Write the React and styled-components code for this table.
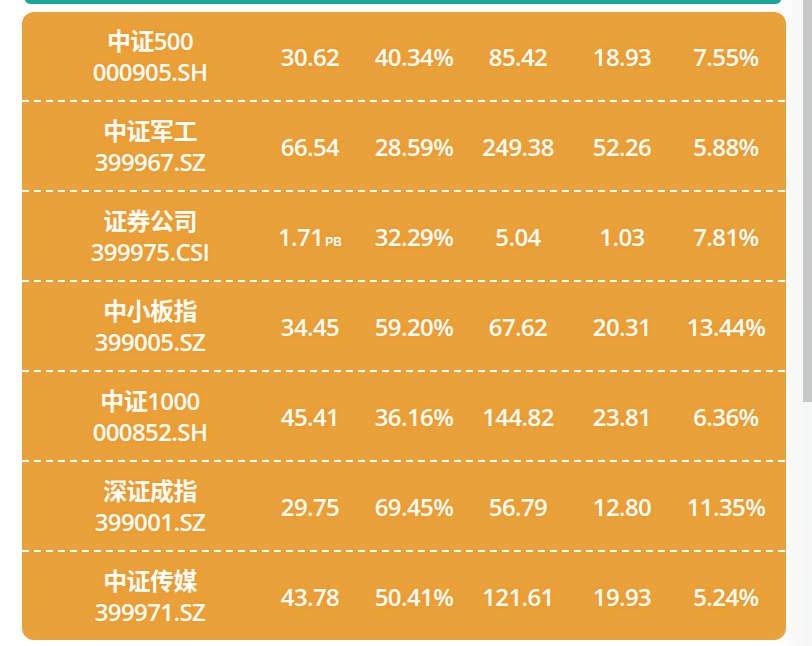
import React from 'react';
import styled, {createGlobalStyle} from 'styled-components';

const GlobalStyle = createGlobalStyle`
  html, body {
    margin: 0;
    padding: 0;
    background: #ffffff;
  }
`;

const Page = styled.div`
  display: flex;
  width: 812px;
  height: 646px;
  overflow: hidden;
`;

const Main = styled.div`
  width: 803px;
  padding-left: 22px;
  box-sizing: border-box;
  background: linear-gradient(90deg, #ffffff 0%, #ffffff 96%, #f7f7f7 100%);
`;

const TopStrip = styled.div`
  width: 756px;
  height: 4px;
  margin-left: 3px;
  background: #17a697;
  border-radius: 0 0 6px 6px / 0 0 4px 4px;
`;

const Card = styled.div`
  margin-top: 8px;
  width: 764px;
  background: #e9a23b;
  border-radius: 12px;
  overflow: hidden;
  font-family: 'Open Sans', 'Noto Sans CJK SC', sans-serif;
  color: #ffffff;
`;

const Row = styled.div`
  display: grid;
  grid-template-columns: 216px repeat(5, 104px);
  padding-left: 20px;
  height: 88px;
  align-items: center;
  text-shadow: 0 0 6px rgba(250, 135, 15, 0.6);
`;

const Divider = styled.div`
  height: 2px;
  background-image: linear-gradient(90deg, #ffffff 0 7px, transparent 7px 12px);
  background-size: 12px 2px;
  background-repeat: repeat-x;
`;

const Name = styled.div`
  display: flex;
  flex-direction: column;
  align-items: center;
  font-size: 24px;
  font-weight: 600;
  line-height: 31px;
  letter-spacing: -0.6px;
`;

const Value = styled.div`
  text-align: center;
  font-size: 24px;
  font-weight: 600;
  letter-spacing: -0.6px;
  white-space: nowrap;
`;

const Unit = styled.span`
  font-family: 'Liberation Sans', sans-serif;
  font-size: 12px;
  font-weight: 700;
  margin-left: 2px;
  letter-spacing: 0;
`;

const ScrollTrack = styled.div`
  width: 9px;
  background: #f6f6f6;
`;

const ScrollThumb = styled.div`
  height: 402px;
  background: #c8c8c8;
`;

const rows = [
  {name: '中证500', code: '000905.SH', values: ['30.62', '40.34%', '85.42', '18.93', '7.55%']},
  {name: '中证军工', code: '399967.SZ', values: ['66.54', '28.59%', '249.38', '52.26', '5.88%']},
  {name: '证券公司', code: '399975.CSI', values: ['1.71', '32.29%', '5.04', '1.03', '7.81%'], unit: 'PB'},
  {name: '中小板指', code: '399005.SZ', values: ['34.45', '59.20%', '67.62', '20.31', '13.44%']},
  {name: '中证1000', code: '000852.SH', values: ['45.41', '36.16%', '144.82', '23.81', '6.36%']},
  {name: '深证成指', code: '399001.SZ', values: ['29.75', '69.45%', '56.79', '12.80', '11.35%']},
  {name: '中证传媒', code: '399971.SZ', values: ['43.78', '50.41%', '121.61', '19.93', '5.24%']}
];

export default function App() {
  return (
    <Page>
      <GlobalStyle />
      <Main>
        <TopStrip />
        <Card>
          {rows.map((row, i) => (
            <React.Fragment key={row.code}>
              {i > 0 && <Divider />}
              <Row>
                <Name>
                  <span>{row.name}</span>
                  <span>{row.code}</span>
                </Name>
                {row.values.map((v, j) => (
                  <Value key={j}>
                    {v}
                    {j === 0 && row.unit && <Unit>{row.unit}</Unit>}
                  </Value>
                ))}
              </Row>
            </React.Fragment>
          ))}
        </Card>
      </Main>
      <ScrollTrack>
        <ScrollThumb />
      </ScrollTrack>
    </Page>
  );
}
